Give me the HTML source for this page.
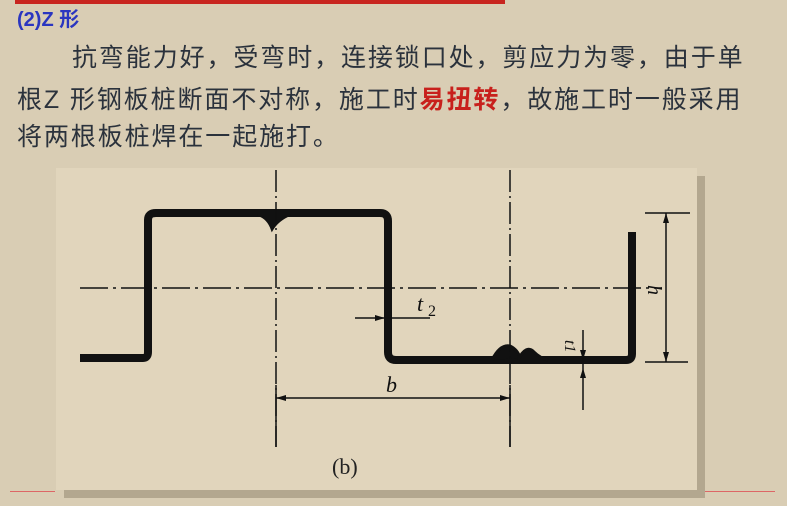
<!DOCTYPE html>
<html><head><meta charset="utf-8"><style>
body{margin:0;width:787px;height:506px;overflow:hidden;background:#d9cdb4;position:relative;font-family:"Liberation Sans","Noto Sans CJK SC",sans-serif;}
.t{position:absolute;white-space:nowrap;color:#2b323c;font-size:25px;line-height:30px;letter-spacing:1.9px}
.r{color:#c8201c;font-weight:bold}
</style></head><body>
<div style="position:absolute;left:15px;top:0;width:490px;height:4px;background:#c8251f"></div>
<div class="t" style="left:17px;top:5px;font-size:20px;color:#2a35c0;font-weight:bold;letter-spacing:0">(2)Z 形</div>
<div class="t" style="left:72px;top:43px">抗弯能力好，受弯时，连接锁口处，剪应力为零，由于单</div>
<div class="t" style="left:17px;top:85px">根Z 形钢板桩断面不对称，施工时<span class="r">易扭转</span>，故施工时一般采用</div>
<div class="t" style="left:17px;top:122px">将两根板桩焊在一起施打。</div>
<div style="position:absolute;left:10px;top:491px;width:45px;height:1px;background:#d66"></div>
<div style="position:absolute;left:697px;top:491px;width:78px;height:1px;background:#d66"></div>
<div style="position:absolute;left:64px;top:176px;width:641px;height:322px;background:#b3a78f"></div>
<div style="position:absolute;left:56px;top:168px;width:641px;height:322px;background:#e1d5bc"></div>
<svg style="position:absolute;left:0;top:0" width="787" height="506">
<g fill="none" stroke="#111">
<path d="M80 358H143Q148 358 148 352V220Q148 213 156 213H380Q388 213 388 221V352Q388 360 396 360H626Q632 360 632 354V232" stroke-width="8"/>
<path d="M258 215Q268 218 272 230Q278 220 290 215Z" fill="#111" stroke-width="2"/>
<path d="M492 360Q500 344 510 346Q518 350 520 358M518 360Q526 344 534 352Q540 358 548 360" fill="#111" stroke-width="3"/>
<g stroke-width="1.5">
<path d="M276 170V447M510 170V447" stroke-dasharray="22 4 2 4"/>
<path d="M80 288H662" stroke-dasharray="28 5 3 5"/>
<path d="M355 318H430M276 398H510M276 385V447M510 385V447M666 213V362M645 213H690M645 362H688M583 330V410"/>
</g>
</g>
<g fill="#111">
<path d="M385 318l-10-3v6zM276 398l10-3v6zM510 398l-10-3v6zM666 213l-3 10h6zM666 362l-3-10h6zM583 360l-3-10h6zM583 368l-3 10h6z"/>
</g>
<g font-family="Liberation Serif,serif" font-style="italic" fill="#111">
<text x="417" y="311" font-size="22">t</text><text x="428" y="316" font-size="16" font-style="normal">2</text>
<text x="386" y="392" font-size="22">b</text>
<text transform="translate(648,285) rotate(90)" font-size="20">h</text>
<text transform="translate(565,340) rotate(90)" font-size="16">t1</text>
</g>
<text x="332" y="474" font-family="Liberation Serif,serif" font-size="22" fill="#222">(b)</text>
</svg>
</body></html>
